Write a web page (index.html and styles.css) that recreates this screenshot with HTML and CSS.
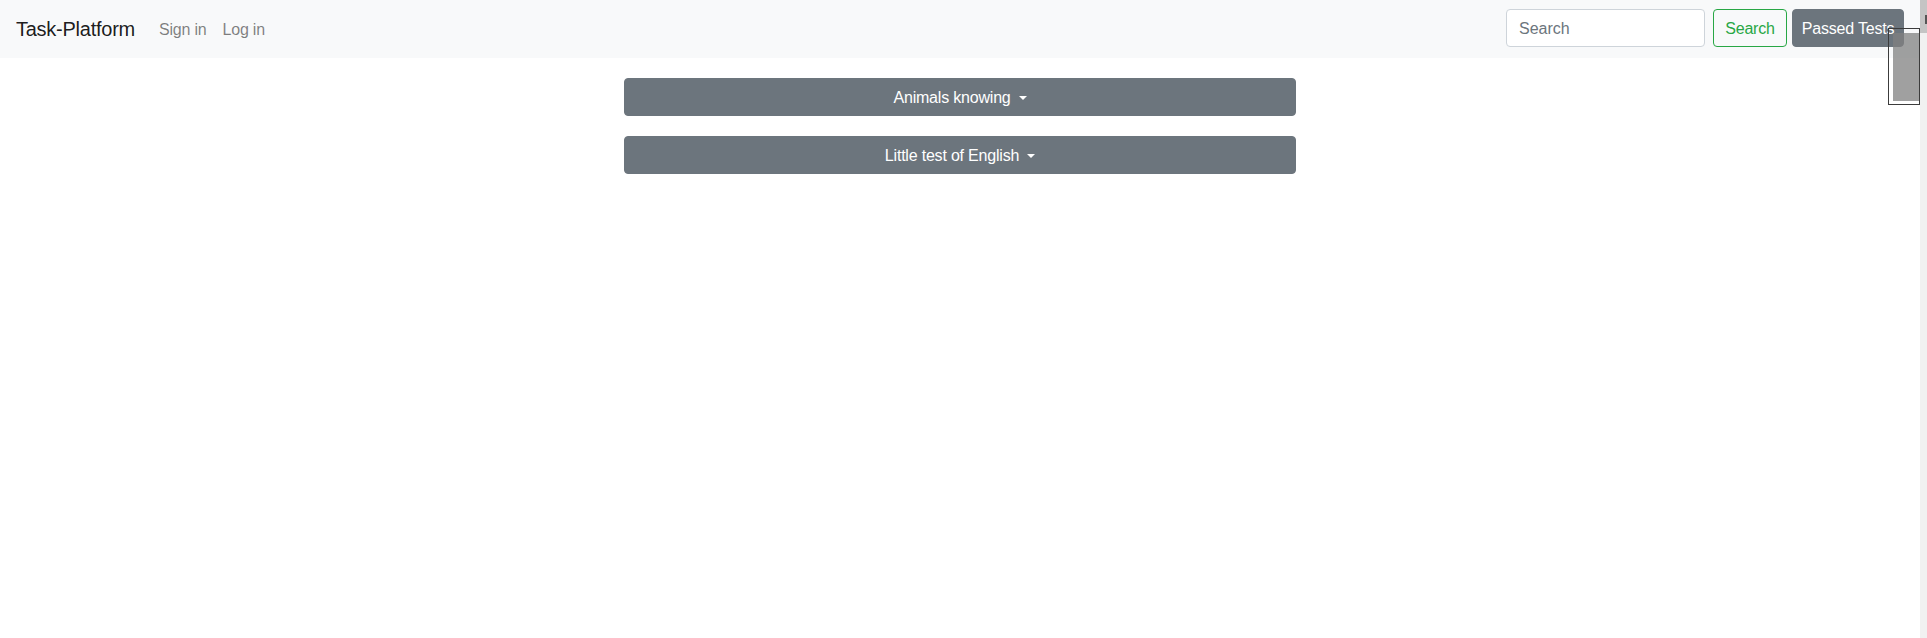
FILE: index.html
```html
<!DOCTYPE html>
<html lang="en">
<head>
<meta charset="utf-8">
<title>Task-Platform</title>
<link rel="stylesheet" href="styles.css">
</head>
<body>
<div class="page">
  <nav class="navbar">
    <a class="brand" href="#">Task-Platform</a>
    <ul class="nav">
      <li><a class="nav-link" href="#">Sign in</a></li>
      <li><a class="nav-link" href="#">Log in</a></li>
    </ul>
    <form class="search-form">
      <input class="form-control" type="search" placeholder="Search">
      <button class="btn btn-outline" type="button">Search</button>
      <button class="btn btn-secondary btn-passed" type="button">Passed Tests</button>
    </form>
  </nav>
  <main class="tests">
    <button class="btn btn-secondary btn-block dropdown-toggle" type="button">Animals knowing</button>
    <button class="btn btn-secondary btn-block dropdown-toggle" type="button">Little test of English</button>
  </main>
</div>
<div class="scrollbar"><div class="thumb"></div><div class="mark"></div></div>
<div class="overlay-box"><div class="overlay-fill"></div></div>
</body>
</html>
```
FILE: styles.css
```css
* { box-sizing: border-box; }
html, body { margin: 0; padding: 0; }
body {
  font-family: "Liberation Sans", Arial, sans-serif;
  font-size: 16px;
  line-height: 1.5;
  color: #212529;
  background: #fff;
  width: 1927px;
  height: 638px;
  overflow: hidden;
  position: relative;
}
.page { width: 1920px; }
.navbar {
  display: flex;
  align-items: flex-start;
  height: 58px;
  padding: 9px 16px 0 16px;
  background: #f8f9fa;
}
.brand {
  font-size: 20px;
  line-height: 30px;
  padding-top: 5px;
  margin-right: 16px;
  color: rgba(0,0,0,.9);
  text-decoration: none;
  letter-spacing: -0.25px;
}
.nav {
  display: flex;
  list-style: none;
  margin: 0;
  padding: 0;
  flex: 1;
}
.nav-link {
  display: block;
  padding: 9px 8px 5px;
  line-height: 24px;
  color: rgba(0,0,0,.5);
  text-decoration: none;
  letter-spacing: -0.2px;
}
.search-form { display: flex; align-items: center; }
.form-control {
  width: 199px;
  height: 38px;
  padding: 7px 12px 5px;
  font-family: inherit;
  font-size: 16px;
  color: #495057;
  border: 1px solid #ced4da;
  border-radius: 4px;
  background: #fff;
  margin-right: 8px;
}
.form-control::placeholder { color: #6c757d; opacity: 1; }
.btn {
  font-family: inherit;
  font-size: 16px;
  line-height: 24px;
  height: 38px;
  padding: 7px 12px 5px;
  border: 1px solid transparent;
  border-radius: 4px;
  cursor: pointer;
  white-space: nowrap;
  letter-spacing: -0.2px;
}
.btn-outline {
  width: 74px;
  padding: 7px 0 5px;
  color: #28a745;
  border-color: #28a745;
  background: transparent;
}
.btn-secondary {
  color: #fff;
  background: #6c757d;
  border-color: #6c757d;
}
.btn-passed { width: 112px; padding: 7px 0 5px; margin-left: 5px; }
.tests {
  width: 672px;
  margin: 20px auto 0;
  display: flex;
  flex-direction: column;
  gap: 20px;
}
.btn-block { width: 100%; display: block; }
.dropdown-toggle::after {
  content: "";
  display: inline-block;
  margin-left: 8px;
  vertical-align: 3px;
  border-top: 4.5px solid #fff;
  border-left: 4.5px solid transparent;
  border-right: 4.5px solid transparent;
}
.scrollbar {
  position: absolute;
  top: 0;
  right: 0;
  width: 7px;
  height: 638px;
  background: #f1f1f1;
}
.scrollbar .thumb { height: 33px; background: #c4c4c4; }
.scrollbar .mark {
  position: absolute;
  top: 15px;
  right: 0;
  width: 2px;
  height: 9px;
  background: #555;
}
.overlay-box {
  position: absolute;
  left: 1888px;
  top: 28px;
  width: 32px;
  height: 77px;
  border: 1px solid #3c3c3c;
  padding: 4px 0 3px 4px;
}
.overlay-fill { width: 100%; height: 100%; background: rgba(128,128,128,.75); }
```
